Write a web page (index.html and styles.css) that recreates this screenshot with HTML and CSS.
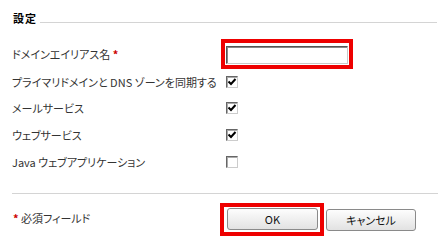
FILE: index.html
```html
<!DOCTYPE html>
<html>
<head lang="ja">
    <meta charset="UTF-8">
    <title>設定</title>
    <link rel="stylesheet" href="styles.css">
</head>
<body>
<div class="page">
    <div class="section_head">
        <span class="section_title">設定</span>
        <span class="rule"></span>
    </div>
    <form class="form">
        <div class="row row_first">
            <label class="label">ドメインエイリアス名 <span class="req">*</span></label>
            <span class="mark mark_input"><input class="text" type="text"/></span>
        </div>
        <div class="row row_second">
            <label class="label">プライマリドメインと DNS ゾーンを同期する</label>
            <span class="check checked"></span>
        </div>
        <div class="row">
            <label class="label">メールサービス</label>
            <span class="check checked"></span>
        </div>
        <div class="row">
            <label class="label">ウェブサービス</label>
            <span class="check checked"></span>
        </div>
        <div class="row">
            <label class="label">Java ウェブアプリケーション</label>
            <span class="check"></span>
        </div>
    </form>
    <div class="footer">
        <span class="note"><span class="req">*</span> 必須フィールド</span>
        <span class="mark mark_button"><button class="btn" type="button">OK</button></span>
        <button class="btn btn_cancel" type="button">キャンセル</button>
    </div>
</div>
</body>
</html>
```
FILE: styles.css
```css
body {
    margin: 0;
    background: #fff;
    font-family: "Noto Sans CJK JP", "DejaVu Sans", sans-serif;
    font-size: 11px;
    color: #333;
    font-feature-settings: "palt";
}
.page {
    padding: 11px 0 0 12px;
}
.section_head {
    display: flex;
    align-items: flex-end;
    height: 14px;
}
.section_title {
    font-weight: bold;
    color: #000;
    line-height: 14px;
    margin-left: 1px;
    letter-spacing: 1px;
}
.rule {
    flex: 1;
    height: 1px;
    background: #d4d4d4;
    margin: 0 1px 2px 3px;
}
.form {
    margin: 14px 0 0 0;
}
.row {
    display: flex;
    align-items: center;
    height: 27px;
}
.row_first {
    height: 30px;
}
.row_second {
    height: 25px;
}
.label {
    width: 209px;
    line-height: 14px;
    white-space: nowrap;
}
.req {
    color: #c00;
    font-weight: bold;
}
.mark {
    display: inline-block;
    border: 4px solid #e00;
}
.mark_input {
    width: 124px;
    height: 22px;
    box-sizing: content-box;
}
.text {
    display: block;
    box-sizing: border-box;
    width: 122px;
    height: 18px;
    margin: 3px 0 0 1px;
    padding: 0;
    border: 1px solid;
    border-color: #555 #c8c8c8 #c8c8c8 #555;
    box-shadow: inset 1px 1px 0 #888;
    background: #fff;
}
.check {
    display: inline-block;
    box-sizing: border-box;
    width: 12px;
    height: 12px;
    margin-left: 5px;
    border: 1px solid;
    border-color: #666 #ccc #ccc #666;
    box-shadow: inset 1px 1px 0 #aaa;
    background: #fff;
}
.checked {
    background: #fff url("data:image/svg+xml;utf8,<svg xmlns='http://www.w3.org/2000/svg' width='10' height='10'><path d='M1.5 4.5 L4 7 L8.5 2' fill='none' stroke='black' stroke-width='2'/></svg>") no-repeat center;
}
.footer {
    display: flex;
    align-items: center;
    margin-top: 18px;
    border-top: 1px solid #d4d4d4;
    padding-top: 9px;
}
.note {
    width: 207px;
    line-height: 14px;
    margin-top: -4px;
    margin-left: 1px;
    white-space: nowrap;
}
.mark_button {
    padding: 1px 2px 2px 3px;
}
.btn {
    display: block;
    box-sizing: border-box;
    width: 91px;
    height: 22px;
    padding: 0;
    border: 1px solid #8a8a8a;
    border-radius: 3px;
    background: linear-gradient(#fdfdfd, #e2e2e2);
    font-family: "Noto Sans CJK JP", "DejaVu Sans", sans-serif;
    font-size: 11px;
    color: #111;
    font-feature-settings: "palt";
}
.btn_cancel {
    width: 90px;
    margin-left: 2px;
}
```
